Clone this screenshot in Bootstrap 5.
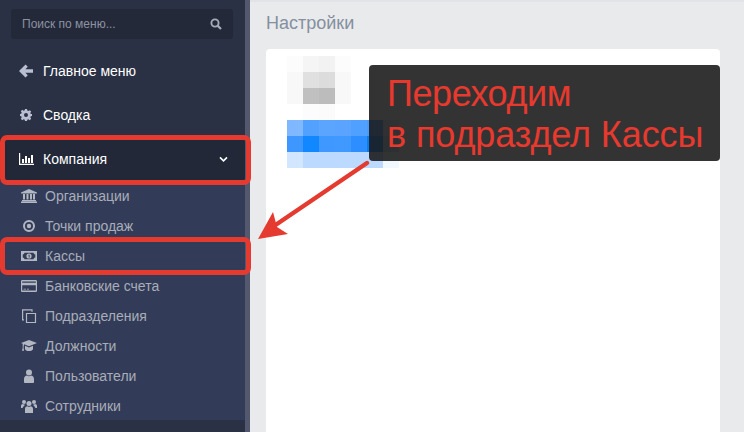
<!DOCTYPE html>
<html lang="ru">
<head>
    <meta charset="UTF-8">
    <title>Настройки</title>
    <link href="https://cdn.jsdelivr.net/npm/bootstrap@5.3.3/dist/css/bootstrap.min.css" rel="stylesheet">
    <style>
        html, body { height: 432px; overflow: hidden; }
        body { font-family: "Liberation Sans", Arial, sans-serif; background: #e9eaec; }
        .shell { height: 432px; position: relative; }
        .side { width: 245px; background: #2a3144; height: 432px; }
        .side-edge { width: 5px; background: #53586f; height: 432px; }
        .search-box { margin: 9px 12px 0 11px; height: 30px; background: #232939; border-radius: 3px; padding: 0 11px; color: #8d92a1; font-size: 12px; }
        .top-link { height: 44px; color: #fff; font-size: 14px; padding-left: 19px; }
        .top-link svg { width: 14px; height: 14px; margin-right: 10px; fill: #b9bed1; flex: none; }
        .top-link.first { margin-top: 10px; }
        .top-link.open { background: #222838; height: 44px; padding-right: 17px; }
        .top-link.open svg.lead-ico { fill: #fff; width: 15px; margin-right: 9px; }
        .sub-menu { background: #323c58; height: 239px; }
        .sub-link { height: 30px; color: #a9adb8; font-size: 14px; padding-left: 21px; }
        .sub-link svg { width: 16px; height: 14px; margin-right: 8px; flex: none; fill: #b3b7c2; }
        .main-area { min-width: 0; border-top: 2px solid #e2e3e6; padding: 11px 24px 0 16px; }
        .page-title { font-size: 18px; color: #84909f; line-height: 20px; margin: 0 0 16px; }
        .white-panel { background: #fff; height: 400px; border-radius: 4px 4px 0 0; padding: 7px 0 0 21px; }
        .mosaic { display: grid; grid-template-columns: repeat(7, 16px); grid-auto-rows: 16px; width: 112px; }
        .note { position: absolute; left: 369px; top: 65px; width: 351px; height: 96px; background: rgba(26, 26, 26, .89); border-radius: 4px; color: #e8392e; font-size: 36px; line-height: 41px; padding: 8px 0 0 18px; letter-spacing: -.1px; white-space: nowrap; }
        .note-first { letter-spacing: -.43px; }
        .frame { position: absolute; left: 0; width: 251px; border: 5px solid #e53a30; border-radius: 7px; }
        .frame-a { top: 135px; height: 50px; }
        .frame-b { top: 237px; height: 38px; }
        .pointer { position: absolute; left: 250px; top: 155px; }
    </style>
</head>
<body>
<div class="shell d-flex">
    <!-- Sidebar -->
    <div class="side flex-shrink-0">
        <div class="search-box d-flex align-items-center justify-content-between">
            <span>Поиск по меню...</span>
            <svg width="12" height="12" viewBox="0 0 12 12"><circle cx="5" cy="5" r="3.6" fill="none" stroke="#a7abb8" stroke-width="1.9"/><path d="M7.6 7.6 11 11" stroke="#a7abb8" stroke-width="2.2"/></svg>
        </div>
        <a class="top-link first d-flex align-items-center text-decoration-none">
            <svg viewBox="0 0 14 14"><path d="M6.500 0.500 8.800 2.800 6.400 5.200h7.600v3.600H6.400l2.400 2.400-2.300 2.300L0 7z"/></svg>Главное меню
        </a>
        <a class="top-link d-flex align-items-center text-decoration-none">
            <svg viewBox="0 0 14 14"><path fill-rule="evenodd" d="M6 1h2l.3 1.6 1.1.5 1.4-.9 1.4 1.4-.9 1.4.5 1.1L13 6v2l-1.2.3-.5 1.1.9 1.4-1.4 1.4-1.4-.9-1.1.5L8 13H6l-.3-1.2-1.1-.5-1.4.9-1.4-1.4.9-1.4-.5-1.1L1 8V6l1.2-.3.5-1.1-.9-1.4 1.4-1.4 1.4.9 1.1-.5zM7 5a2 2 0 1 0 0 4 2 2 0 0 0 0-4z"/></svg>Сводка
        </a>
        <a class="top-link open d-flex align-items-center text-decoration-none">
            <svg class="lead-ico" viewBox="0 0 15 14"><path d="M0 1h1.200v10.800H15V13H0zM3 7h2v4H3zM6 4h2v7H6zM9 6h2v5H9zM12 3h2v8h-2z"/></svg>Компания
            <svg class="ms-auto me-0" style="width:9px;height:7px;margin-right:0" viewBox="0 0 10 8"><path d="M1 1.600 5 5.600l4-4" fill="none" stroke="#fff" stroke-width="1.800"/></svg>
        </a>
        <div class="sub-menu">
            <a class="sub-link d-flex align-items-center text-decoration-none"><svg viewBox="0 0 16 14"><path d="M8 0 16 3.400v1H0v-1zM2 5h2v5.500H2zM5.500 5h2v5.500h-2zM9 5h2v5.500H9zM12 5h2v5.500h-2zM1 11h14v1.200H1zM0 12.600h16V14H0z"/></svg>Организации</a>
            <a class="sub-link d-flex align-items-center text-decoration-none"><svg viewBox="0 0 16 14"><path fill-rule="evenodd" d="M8 1a6 6 0 1 1 0 12A6 6 0 0 1 8 1zm0 2a4 4 0 1 0 0 8 4 4 0 0 0 0-8z"/><circle cx="8" cy="7" r="2.200"/></svg>Точки продаж</a>
            <a class="sub-link d-flex align-items-center text-decoration-none"><svg viewBox="0 0 16 14"><path fill-rule="evenodd" d="M0 2h16v10H0zm3.500 1.700a2 2 0 0 1-1.800 1.800v3a2 2 0 0 1 1.800 1.800h9a2 2 0 0 1 1.800-1.800v-3a2 2 0 0 1-1.800-1.800z"/><path fill-rule="evenodd" d="M8 4.400a2.600 2.600 0 1 1 0 5.200 2.600 2.600 0 0 1 0-5.200zM7.400 5.800v.7h.3v2h.9V5.800z"/></svg>Кассы</a>
            <a class="sub-link d-flex align-items-center text-decoration-none"><svg viewBox="0 0 16 14"><path fill-rule="evenodd" d="M1.300 1h13.400c.7 0 1.300.6 1.300 1.300v9.400c0 .7-.6 1.300-1.300 1.300H1.300C.6 13 0 12.400 0 11.700V2.300C0 1.600.6 1 1.300 1zM1.200 2.400v1.300h13.600V2.400zm0 3.800v5.400h13.600V6.200zM2.500 9.800h2.500v.8H2.500zm3.500 0h2v.8H6z"/></svg>Банковские счета</a>
            <a class="sub-link d-flex align-items-center text-decoration-none"><svg viewBox="0 0 16 14"><path fill="none" stroke="#b3b7c2" stroke-width="1.200" d="M5.500 4.500h9v9h-9zM3 10.800H1.600V.8h9.400v2"/></svg>Подразделения</a>
            <a class="sub-link d-flex align-items-center text-decoration-none"><svg viewBox="0 0 16 14"><path d="M8 1 16 4 8 7.200 3 5.200 2.500 8.800l.6 3H1l.7-3V4.800L0 4zM4 6.800 8 8.400l4-1.600v3.100c0 1.200-2 2.100-4 2.100s-4-.9-4-2.100z"/></svg>Должности</a>
            <a class="sub-link d-flex align-items-center text-decoration-none"><svg viewBox="0 0 16 14"><circle cx="8" cy="3.500" r="3"/><path d="M3 13v-3c0-2.200 1.500-3.400 3-3.500.6.500 1.200.8 2 .8s1.400-.3 2-.8c1.500.1 3 1.300 3 3.500v3c0 .6-.5 1-1 1H4c-.5 0-1-.4-1-1z"/></svg>Пользователи</a>
            <a class="sub-link d-flex align-items-center text-decoration-none"><svg viewBox="0 0 16 14"><circle cx="8" cy="4.500" r="2.500"/><circle cx="3" cy="3" r="2"/><circle cx="13" cy="3" r="2"/><path d="M4 14v-4c0-1.800 1.200-2.800 2.300-2.800.5.400 1 .6 1.700.6s1.200-.2 1.700-.6C10.800 7.200 12 8.200 12 10v4zM0 9V7c0-1.200.8-2 1.800-2 .4.300.8.500 1.200.5h.8c-.2 1-.8 1.500-1.300 2-.5.500-.8 1-.9 1.500zM16 9V7c0-1.200-.8-2-1.800-2-.4.300-.8.500-1.200.5h-.8c.2 1 .8 1.500 1.300 2 .5.500.8 1 .9 1.500z"/></svg>Сотрудники</a>
        </div>
    </div>
    <div class="side-edge flex-shrink-0"></div>

    <!-- Main content -->
    <div class="main-area flex-grow-1">
        <h1 class="page-title">Настройки</h1>
        <div class="white-panel">
            <div class="mosaic" id="mosaic"></div>
        </div>
    </div>

    <!-- Annotations -->
    <div class="frame frame-a"></div>
    <div class="frame frame-b"></div>
    <div class="note"><span class="note-first">Переходим</span><br>в подраздел Кассы</div>
    <svg class="pointer" width="125" height="90" viewBox="0 0 125 90">
        <path d="M117 8 24 71" stroke="#e53a30" stroke-width="4.500" stroke-linecap="round"/>
        <path d="M8 84 23 57 27 72 38 79z" fill="#e53a30"/>
    </svg>
</div>

<script>
    // мозаика вместо размытых данных
    var cells = [
        '#fcfcfc','#f5f5f5','#f2f2f2','#fcfcfc','','','',
        '#f8f8f8','#e0e0e0','#dcdcdc','#f8f8f8','','','',
        '#f8f8f8','#c0c0c0','#bcbcbc','#f8f8f8','','','',
        '','#fcfcfc','#fbfbfb','','','','',
        '#80b8ff','#52a0ff','#5ca5ff','#5aa4ff','#50a0ff','#4a9bfb','#dcebff',
        '#3d97ff','#1188ff','#3e98ff','#4099ff','#2d8fff','#0a80f0','#c8e0ff',
        '#d2e6ff','#bcdaff','#bcdaff','#bcdaff','#bcdaff','#bcdaff','#f2f8ff'
    ];
    var box = document.getElementById('mosaic');
    cells.forEach(function (c) {
        var d = document.createElement('div');
        if (c) d.style.background = c;
        box.appendChild(d);
    });
</script>
<script src="https://cdn.jsdelivr.net/npm/bootstrap@5.3.3/dist/js/bootstrap.bundle.min.js"></script>
</body>
</html>
